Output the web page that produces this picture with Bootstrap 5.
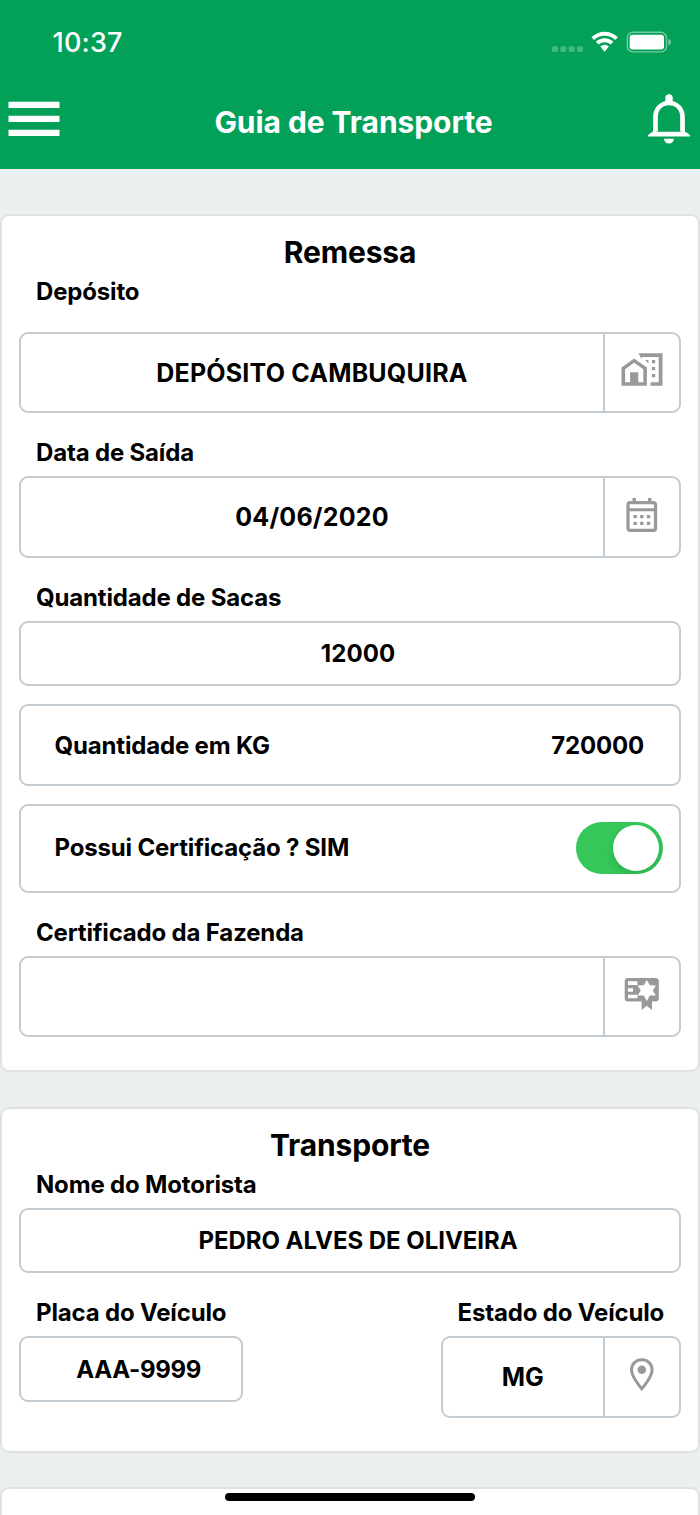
<!DOCTYPE html>
<html lang="pt-BR">
<head>
<meta charset="utf-8">
<meta name="viewport" content="width=device-width, initial-scale=1">
<title>Guia de Transporte</title>
<link href="https://cdn.jsdelivr.net/npm/bootstrap@5.3.0/dist/css/bootstrap.min.css" rel="stylesheet">
<style>
  body { font-family: Inter, "Liberation Sans", sans-serif; font-weight: 700; color: #000; background: #ebeff0; height: 1515px; overflow: hidden; }
  svg { display: block; flex: none; overflow: visible; }
  .topbar { background: #02a157; height: 169px; color: #fff; }
  .statusline { height: 84px; padding: 0 29px 0 52.5px; }
  .clock { font-size: 27px; font-weight: 500; line-height: 36px; letter-spacing: .2px; padding-top: 2px; }
  .appbar { height: 69px; padding: 0 9px 0 8px; }
  .apptitle { font-size: 30px; line-height: 36px; padding-top: 6px; letter-spacing: -.07px; }
  .panel { border: 2px solid #e0e2e2; border-radius: 9px; padding: 18px 17px 33px; margin-bottom: 34.5px; }
  .panel-head { font-size: 30px; line-height: 36px; margin: 0 0 7px; font-weight: 700; text-align: center; letter-spacing: -.15px; }
  .flabel { font-size: 24px; line-height: 30px; margin: 0 0 8px; padding: 0 0 0 17px; height: 30px; display: block; white-space: nowrap; letter-spacing: -.17px; }
  .box { border: 2px solid #c5ccd1; border-radius: 9px; background: #fff; font-size: 24px; letter-spacing: -.17px; }
  .box span, .val { padding-top: 1.5px; }
  .box .caps { letter-spacing: -.05px; }
  .box-lg { height: 81.5px; }
  .box-md { height: 65.5px; padding-left: 16px; }
  .addon { width: 76px; border-left: 2px solid #c5ccd1; color: #999; }
  .stack { margin-bottom: 25px; }
  .val { font-size: 25px; letter-spacing: .2px; }
  .toggle { width: 86.5px; height: 52.5px; border-radius: 27px; background: #35c759; padding: 3.5px; overflow: hidden; }
  .knob { width: 46px; height: 46px; border-radius: 50%; background: #fff; box-shadow: 0 4px 10px rgba(0,0,0,.12); }
  .homebar { left: 225px; bottom: 14px; width: 250px; height: 8.5px; border-radius: 5px; background: #000; }
</style>
</head>
<body>
<header class="topbar">
  <div class="statusline d-flex align-items-center justify-content-between">
    <span class="clock">10:37</span>
    <svg width="120" height="24" viewBox="551 30 120 24" fill="#fff">
      <g opacity=".25"><rect x="552" y="46" width="6" height="6" rx="1.7"/><rect x="560.3" y="46" width="6" height="6" rx="1.7"/><rect x="568.7" y="46" width="6" height="6" rx="1.7"/><rect x="577" y="46" width="6" height="6" rx="1.7"/></g>
      <path d="M591.4 37.2a19 19 0 0 1 26.4 0l-2.7 2.8a15.2 15.2 0 0 0-21 0zM595.8 41.8a12.7 12.7 0 0 1 17.6 0l-2.8 2.8a8.8 8.8 0 0 0-12 0zM600.3 46.5a6.4 6.4 0 0 1 8.6 0l-4.3 5.2z"/>
      <rect x="627.3" y="32.3" width="39.2" height="19.6" rx="5.5" fill="none" stroke="#fff" stroke-opacity=".45" stroke-width="1.4"/>
      <rect x="629.6" y="34.8" width="34.4" height="14.6" rx="3"/>
      <path d="M668.5 39q2.5.8 2.5 3.2t-2.5 3.2z" opacity=".5"/>
    </svg>
  </div>
  <div class="appbar d-flex align-items-center justify-content-between">
    <svg width="52" height="36" viewBox="0 0 52 36" fill="#fff"><path d="M.5.7h51V7H.5zM.5 14.700h51V21H.5zM.5 28.700h51V35H.5z"/></svg>
    <span class="apptitle">Guia de Transporte</span>
    <svg width="44" height="52" viewBox="647 93.500 44 52">
      <path d="M655.500 132V117.500c0-8 5.500-14 13.500-14s13.500 6 13.500 14V132" fill="none" stroke="#fff" stroke-width="4.700"/>
      <path d="M665.300 102v-3.500a3.700 3.700 0 0 1 7.400 0V102zM653.200 128.500v3.200L648 135.500v1.500h42v-1.500l-5.200-3.800v-3.200l-3.500 3.700H656.500zM664 139.200h10q-.6 4.800-5 4.800t-5-4.800z" fill="#fff"/>
    </svg>
  </div>
</header>

<main style="padding-top:45px">
  <section class="panel bg-white">
    <h2 class="panel-head">Remessa</h2>
    <label class="flabel" style="margin-bottom:24.500px">Depósito</label>
    <div class="box box-lg stack d-flex">
      <div class="val flex-grow-1 d-flex align-items-center justify-content-center" style="padding-top:3px">DEPÓSITO CAMBUQUIRA</div>
      <div class="addon d-flex align-items-center justify-content-center">
        <svg width="42" height="34" viewBox="621.500 355 42 34" fill="#999">
          <path d="M622 367.500 634.600 358.500 647.400 367.500V385.800H622zM625.600 369.300V382.200H630.600V372.300h8.200v9.900H643.800V369.300L634.600 362.800z" fill-rule="evenodd"/>
          <path d="M639 353.300h24V385.800H651v-3.500h8.200V356.900h-17v2.400z"/>
          <path d="M645.600 360h3.300v3.400zM652.400 360h3.300v3.300h-3.300zM652.400 367h3.300v3.300h-3.300zM652.400 374h3.300v3.300h-3.300z"/>
        </svg>
      </div>
    </div>

    <label class="flabel">Data de Saída</label>
    <div class="box box-lg stack d-flex">
      <div class="val flex-grow-1 d-flex align-items-center justify-content-center">04/06/2020</div>
      <div class="addon d-flex align-items-center justify-content-center">
        <svg width="32" height="36" viewBox="626.500 499 32 36" fill="#999">
          <rect x="628.500" y="502.700" width="27.500" height="27.600" rx="2" fill="none" stroke="#999" stroke-width="3.200"/>
          <path d="M633 498h3.500v5H633zM648.500 498h3.500v5h-3.500zM628 508.300h28v2.900h-28zM634 515h3.300v3.300H634zM640.700 515h3.300v3.300h-3.300zM647.400 515h3.300v3.300h-3.300zM634 521.700h3.300v3.300H634zM640.700 521.700h3.300v3.300h-3.300zM647.400 521.700h3.300v3.300h-3.300z"/>
        </svg>
      </div>
    </div>

    <label class="flabel">Quantidade de Sacas</label>
    <div class="box box-md d-flex align-items-center justify-content-center"><span style="letter-spacing:.1px">12000</span></div>

    <div class="box d-flex align-items-center justify-content-between" style="height:82.500px;margin-top:17.500px;padding:0 35px 0 33.500px">
      <span>Quantidade em KG</span><span>720000</span>
    </div>

    <div class="box stack d-flex align-items-center justify-content-between" style="height:89px;margin-top:17.500px;padding:0 16.500px 0 33.500px">
      <span class="pt-0">Possui Certificação ? SIM</span>
      <div class="toggle d-flex justify-content-end align-items-center"><div class="knob"></div></div>
    </div>

    <label class="flabel">Certificado da Fazenda</label>
    <div class="box box-lg d-flex">
      <div class="flex-grow-1"></div>
      <div class="addon d-flex align-items-center justify-content-center">
        <svg width="34" height="34" viewBox="625.500 980 34 34">
          <path d="M628.500 979H656a3.300 3.300 0 0 1 3.300 3.300v17a3.300 3.300 0 0 1-3.300 3.300h-3.500v8.400L647.300 1006.700l-5.200 4.300v-8.400H628.500a3.300 3.300 0 0 1-3.300-3.300v-17a3.300 3.300 0 0 1 3.300-3.300z" fill="#999"/>
          <path d="M628.500 982.300h9.500v3.700h-9.500zM628.500 989.200h5v3.500h-5zM628.500 995.800h9.500v3.500h-9.500zM647.300 981l3 5.300 6.200.1-3.200 5 3.200 5.100-6.200.1-3 5.400-3-5.400-6.200-.1 3.200-5.100-3.200-5 6.200-.1z" fill="#fff"/>
        </svg>
      </div>
    </div>
  </section>

  <section class="panel bg-white">
    <h2 class="panel-head">Transporte</h2>
    <label class="flabel">Nome do Motorista</label>
    <div class="box box-md stack d-flex align-items-center justify-content-center"><span class="caps">PEDRO ALVES DE OLIVEIRA</span></div>
    <div class="d-flex justify-content-between align-items-start">
      <div>
        <label class="flabel">Placa do Veículo</label>
        <div class="box box-md d-flex align-items-center justify-content-center" style="width:223.500px"><span style="letter-spacing:-.3px">AAA-9999</span></div>
      </div>
      <div style="width:240.500px">
        <label class="flabel">Estado do Veículo</label>
        <div class="box box-lg d-flex">
          <div class="val flex-grow-1 d-flex align-items-center justify-content-center" style="letter-spacing:-.1px">MG</div>
          <div class="addon d-flex align-items-center justify-content-center">
            <svg width="24" height="34" viewBox="630.500 1359.500 24 34"><path d="M642.300 1359.200c-6 0-10.300 4.300-10.300 10.300 0 7 10.300 18.800 10.300 18.800s10.300-11.800 10.300-18.800c0-6-4.300-10.300-10.300-10.300z" fill="none" stroke="#999" stroke-width="3"/><circle cx="642.300" cy="1369.300" r="4.300" fill="#999"/></svg>
          </div>
        </div>
      </div>
    </div>
  </section>

  <section class="panel bg-white border-bottom-0 rounded-bottom-0 p-0 mb-0" style="height:28px"></section>
</main>
<div class="homebar position-fixed"></div>
<script src="https://cdn.jsdelivr.net/npm/bootstrap@5.3.0/dist/js/bootstrap.bundle.min.js"></script>
</body>
</html>
